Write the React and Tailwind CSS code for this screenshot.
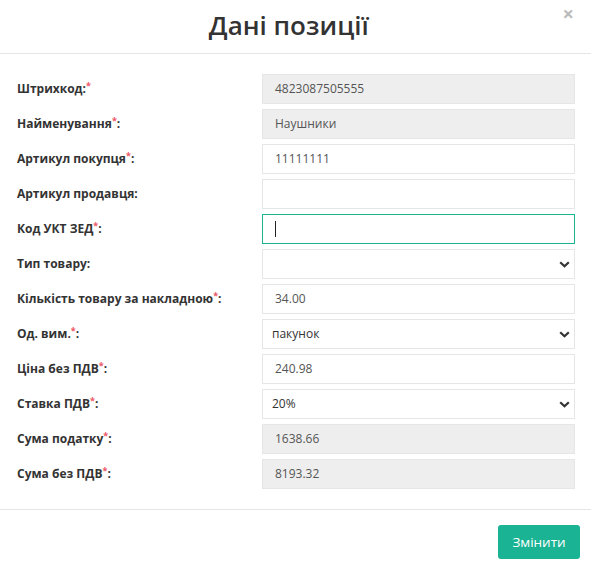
import React from "react";

const rows = [
  { label: "Штрихкод:", star: "after", value: "4823087505555", kind: "disabled" },
  { label: "Найменування", star: "mid", value: "Наушники", kind: "disabled" },
  { label: "Артикул покупця", star: "mid", value: "11111111", kind: "input" },
  { label: "Артикул продавця:", star: null, value: "", kind: "input" },
  { label: "Код УКТ ЗЕД", star: "mid", value: "", kind: "focus" },
  { label: "Тип товару:", star: null, value: "", kind: "select" },
  { label: "Кількість товару за накладною", star: "mid", value: "34.00", kind: "input" },
  { label: "Од. вим.", star: "mid", value: "пакунок", kind: "select" },
  { label: "Ціна без ПДВ", star: "mid", value: "240.98", kind: "input" },
  { label: "Ставка ПДВ", star: "mid", value: "20%", kind: "select" },
  { label: "Сума податку", star: "mid", value: "1638.66", kind: "disabled" },
  { label: "Сума без ПДВ", star: "mid", value: "8193.32", kind: "disabled" },
];

function Star() {
  return <sup className="text-[#ed5565] text-[9px]">*</sup>;
}

function Label({ row }) {
  return (
    <div className="w-[245px] shrink-0 text-[12px] font-bold text-[#333]">
      {row.label}
      {row.star && <Star />}
      {row.star === "mid" && ":"}
    </div>
  );
}

function Chevron() {
  return (
    <svg width="11" height="7" viewBox="0 0 11 7" className="shrink-0">
      <path d="M1.2 1.2 L5.5 5.3 L9.8 1.2" fill="none" stroke="#333" strokeWidth="2.2" />
    </svg>
  );
}

function Field({ row }) {
  if (row.kind === "select") {
    return (
      <div className="flex-1 h-[30px] border border-[#e5e6e7] bg-white flex items-center justify-between pl-[9px] pr-[4px] text-[12px] text-[#333]">
        <span>{row.value}</span>
        <Chevron />
      </div>
    );
  }
  if (row.kind === "focus") {
    return (
      <div className="flex-1 h-[30px] border border-[#1ab394] bg-white flex items-center pl-[12px]">
        <span className="block w-px h-[16px] bg-[#222]"></span>
      </div>
    );
  }
  return (
    <div
      className={`flex-1 h-[30px] border border-[#e5e6e7] flex items-center pl-[12px] text-[12px] text-[#555] ${
        row.kind === "disabled" ? "bg-[#eeeeee]" : "bg-white"
      }`}
    >
      {row.value}
    </div>
  );
}

export default function App() {
  return (
    <div className="w-[591px] h-[573px] bg-white font-['Open_Sans',sans-serif] overflow-hidden">
      {/* Header */}
      <div className="h-[54px] border-b border-[#e5e5e5] flex items-start pl-[15px] pr-[17px]">
        <h4 className="flex-1 text-center text-[26px] font-semibold text-[#333] leading-none pt-[12px]">
          Дані позиції
        </h4>
        <button className="text-[#bbbbbb] text-[20px] font-bold leading-none pt-[4px]">×</button>
      </div>

      {/* Body */}
      <div className="pt-[20px] pb-[20px] pl-[17px] pr-[16px] flex flex-col gap-[5px]">
        {rows.map((row) => (
          <div key={row.label} className="flex items-center">
            <Label row={row} />
            <Field row={row} />
          </div>
        ))}
      </div>

      {/* Footer */}
      <div className="border-t border-[#e5e5e5] flex justify-end pt-[15px] pr-[11px]">
        <button className="h-[34px] w-[82px] bg-[#1ab394] text-white text-[13.5px] rounded-[3px]">
          Змінити
        </button>
      </div>
    </div>
  );
}
